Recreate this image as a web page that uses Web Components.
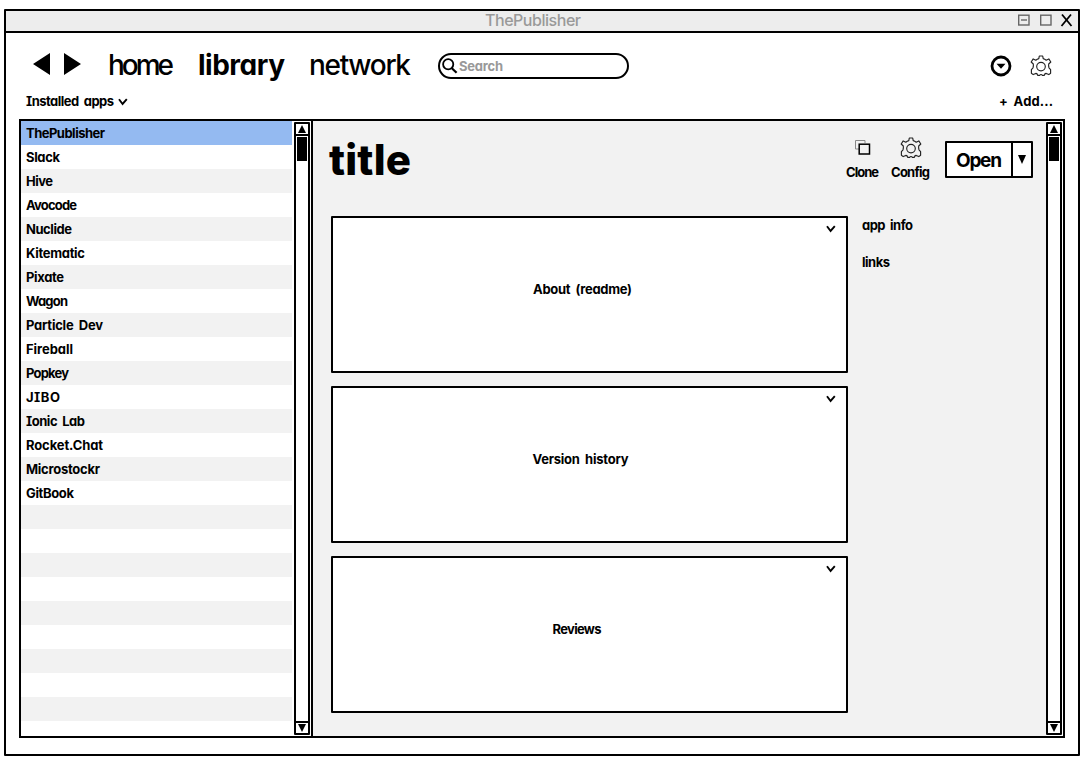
<!DOCTYPE html>
<html lang="en">
<head>
<meta charset="utf-8">
<title>ThePublisher</title>
<style>
html,body{margin:0;height:100%;background:#fff;overflow:hidden}
body{font:650 13px/24px "Comic Sans MS",Inter,"Open Sans",sans-serif;font-feature-settings:"cv08","cv11";word-spacing:2.5px;color:#000}
</style>
</head>
<body>
<publisher-window></publisher-window>
<script>
const define = (name, html, setup) => {
  const t = document.createElement('template');
  t.innerHTML = html;
  customElements.define(name, class extends HTMLElement {
    connectedCallback() {
      if (this.shadowRoot) return;
      this.attachShadow({mode: 'open'}).append(t.content.cloneNode(true));
      if (setup) setup(this, this.shadowRoot);
    }
  });
};

/* Text tracked so that it fills the width given in "w". */
define('fit-text', `<style>:host{display:block;white-space:nowrap;flex:none}span{display:inline-block}</style><span><slot></slot></span>`, (el, root) => {
  const w = +el.getAttribute('w');
  el.style.width = w + 'px';
  const s = root.querySelector('span');
  s.style.letterSpacing = (w - s.getBoundingClientRect().width) / Math.max(1, el.textContent.length - 1) + 'px';
});

define('chevron-icon', `<style>:host{display:block;width:10px;height:8px}svg{display:block}</style>
<svg width="10" height="8" viewBox="0 0 10 8"><path d="M1 1.2L4.6 6L8.8 1.2" fill="none" stroke="#000" stroke-width="1.9"/></svg>`);

define('gear-icon', `<style>:host{display:block;width:22px;height:22px}svg{display:block}</style>
<svg width="22" height="22" viewBox="0 0 22 22" fill="none" stroke="#222" stroke-width="1.15" stroke-linejoin="round"><path d="M9.3 1H12.7L13.2 3.6Q14.8 4 16.2 5.2L18.8 3.9L20.8 7L18.7 9Q18.4 11 19 12.8L20.6 14.6V18.2L18.8 19.6L16.2 18.4Q14.8 18.2 14.3 20.4H12.4Q11 18.6 9.6 20.4H7.7Q7.2 18.2 5.8 18.4L3.2 19.6L1.4 18.2V14.6L3 12.8Q3.6 11 3.3 9L1.2 7L3.2 3.9L5.8 5.2Q7.2 4 8.8 3.6Z"/><circle cx="11" cy="11.6" r="4.3"/></svg>`);

define('scroll-bar', `<style>
:host{display:flex;flex-direction:column;box-sizing:border-box;width:16px;height:613px;border:2px solid #000;border-radius:1px;background:#fff;flex:none}
.cell{height:10px;display:flex;justify-content:center;align-items:center}
.up{border-bottom:2px solid #000}.down{border-top:2px solid #000}
.track{flex:1;padding:1px 1px 0}.thumb{height:24px;background:#000}
svg{display:block}</style>
<div class="cell up"><svg width="8" height="8"><path d="M4 0L8 8H0Z"/></svg></div>
<div class="track"><div class="thumb"></div></div>
<div class="cell down"><svg width="8" height="8"><path d="M0 0H8L4 8Z"/></svg></div>`);

define('title-bar', `<style>
:host{display:grid;grid-template-columns:1fr auto 1fr;align-items:center;height:20px;background:#ededed;border-bottom:2px solid #000}
fit-text{grid-column:2;font-size:16px;font-weight:500;line-height:20px;color:#999;position:relative;top:-1px;left:-9px}
svg{justify-self:end;margin-right:5px}</style>
<fit-text w="96">ThePublisher</fit-text>
<svg width="56" height="20" fill="none" stroke="#666" stroke-width="1.4"><rect x="1.7" y="4.2" width="10.3" height="9.8"/><path d="M4 9H10"/><rect x="23.7" y="4.2" width="10.3" height="9.8"/><path d="M45 3.5L54.5 15M54 3.5L44.5 15" stroke="#000" stroke-width="1.8"/></svg>`);

define('search-box', `<style>
:host{display:flex;box-sizing:border-box;width:191px;height:26px;border:2px solid #000;border-radius:13px;padding-left:2px;align-items:center;background:#fff}
fit-text{color:#999;line-height:22px;margin-left:1px}svg{display:block}</style>
<svg width="16" height="18" fill="none" stroke="#000" stroke-width="1.8"><circle cx="6.2" cy="7.3" r="5.1"/><path d="M9.6 11L14.6 15.8" stroke-width="2.2"/></svg>
<fit-text w="44">Search</fit-text>`);

define('nav-bar', `<style>
:host{display:flex;height:58px;padding-left:26px;padding-right:26px}
.arrows{margin-top:19px;margin-right:26px}
fit-text{font-size:28px;font-weight:450;line-height:34px;margin-top:15px;margin-right:24px}
.on{font-weight:700}
search-box{margin-top:20px;margin-left:3px}
.end{margin:22px 0 0 auto;display:flex;gap:18px}</style>
<svg class="arrows" width="50" height="24"><path d="M1 12L18 1V23ZM49 12L32 1V23Z"/></svg>
<fit-text w="66">home</fit-text><fit-text class="on" w="87">library</fit-text><fit-text w="102">network</fit-text>
<search-box></search-box>
<div class="end"><svg width="22" height="22"><circle cx="11" cy="11" r="9" fill="none" stroke="#000" stroke-width="2.8"/><path d="M6.5 8.8H15.5L11 13.8Z"/></svg><gear-icon></gear-icon></div>`);

define('tool-line', `<style>
:host{display:flex;height:28px;padding:0 25px 0 20px;line-height:20px}
chevron-icon{margin:7px 0 0 4px}.add{margin-left:auto}</style>
<fit-text w="88">Installed apps</fit-text><chevron-icon></chevron-icon><fit-text class="add" w="54">+ Add...</fit-text>`);

define('app-row', `<style>
:host{display:block;box-sizing:border-box;height:24px;padding-left:5px;background:#fff}
:host(:nth-child(odd)){background:#f2f2f2}
:host([selected]){background:#94baf1}</style><slot></slot>`);

define('app-list', `<style>
:host{display:flex;width:290px;flex:none;background:#fff;border-right:2px solid #000}
.rows{width:271px;height:615px;overflow:hidden;margin-right:2px}
scroll-bar{margin-top:1px}</style><div class="rows"></div><scroll-bar></scroll-bar>`, (el, root) => {
  const apps = [['ThePublisher',79],['Slack',34],['Hive',27],['Avocode',51],['Nuclide',46],['Kitematic',59],['Pixate',38],['Wagon',42],['Particle Dev',77],['Fireball',47],['Popkey',43],['JIBO',34],['Ionic Lab',59],['Rocket.Chat',77],['Microstockr',74],['GitBook',48]];
  const rows = root.querySelector('.rows');
  for (let i = 0; i < 26; i++) {
    const row = document.createElement('app-row');
    if (!i) row.setAttribute('selected', '');
    if (apps[i]) row.innerHTML = `<fit-text w="${apps[i][1]}">${apps[i][0]}</fit-text>`;
    rows.append(row);
  }
});

define('info-card', `<style>
:host{display:grid;box-sizing:border-box;width:517px;height:157px;border:2px solid #000;border-radius:1px;background:#fff}
.label{grid-area:1/1;align-self:center;justify-self:center;padding:0 var(--inset,14px) 11px 0;height:24px}
chevron-icon{grid-area:1/1;justify-self:end;align-self:start;margin:7px 10px 0 0}</style>
<div class="label"><slot></slot></div><chevron-icon></chevron-icon>`);

define('tool-button', `<style>
:host{display:flex;flex-direction:column;align-items:center;line-height:20px}
.pic{height:25px}</style><div class="pic"><slot name="icon"></slot></div><slot></slot>`);

define('open-button', `<style>
:host{display:flex;box-sizing:border-box;width:88px;height:37px;border:2px solid #000;border-radius:1px;background:#fff}
.main{width:64px;display:flex;justify-content:center;border-right:2px solid #000}
fit-text{font-size:19px;font-weight:700;line-height:35px}
.drop{flex:1;display:flex;justify-content:center;padding-top:12px}</style>
<div class="main"><fit-text w="46">Open</fit-text></div><div class="drop"><svg width="10" height="10"><path d="M1 0H9L5 9Z"/></svg></div>`);

define('detail-view', `<style>
:host{display:flex;flex:1;background:#f2f2f2}
.content{flex:1;padding-left:18px}
header{display:flex;height:95px}
.title{font-size:42px;font-weight:800;line-height:52px;margin-top:13px;margin-left:-2px}
.tools{display:flex;gap:12px;margin:16px 13px 0 auto}
open-button{margin-top:4px;margin-left:3px}
.body{display:flex;gap:14px}.cards{display:flex;flex-direction:column;gap:13px}
.side{margin-top:-1px;line-height:20px;display:flex;flex-direction:column;gap:17px}
.bar{background:#fff;padding:1px 1px 0 0}</style>
<div class="content">
<header><fit-text class="title" w="82">title</fit-text>
<div class="tools">
<tool-button><svg slot="icon" width="18" height="22" fill="none"><path d="M5 12H1.5V3.5H11V6" stroke="#888"/><rect x="5.2" y="7.2" width="10.3" height="9.8" stroke="#000" stroke-width="1.5"/></svg><fit-text w="33">Clone</fit-text></tool-button>
<tool-button><gear-icon slot="icon"></gear-icon><fit-text w="39">Config</fit-text></tool-button>
<open-button></open-button>
</div></header>
<div class="body"><div class="cards">
<info-card><fit-text w="99">About (readme)</fit-text></info-card>
<info-card style="--inset:18px"><fit-text w="96">Version history</fit-text></info-card>
<info-card style="--inset:25px"><fit-text w="49">Reviews</fit-text></info-card>
</div><div class="side"><fit-text w="51">app info</fit-text><fit-text w="28">links</fit-text></div></div>
</div>
<div class="bar"><scroll-bar></scroll-bar></div>`);

define('publisher-window', `<style>
:host{display:block;box-sizing:border-box;width:1076px;height:747px;margin:9px 0 0 4px;border:2px solid #000;border-radius:1px;background:#fff}
main{display:flex;box-sizing:border-box;width:1046px;height:619px;margin-left:13px;border:2px solid #000}</style>
<title-bar></title-bar><nav-bar></nav-bar><tool-line></tool-line>
<main><app-list></app-list><detail-view></detail-view></main>`);
</script>
</body>
</html>
